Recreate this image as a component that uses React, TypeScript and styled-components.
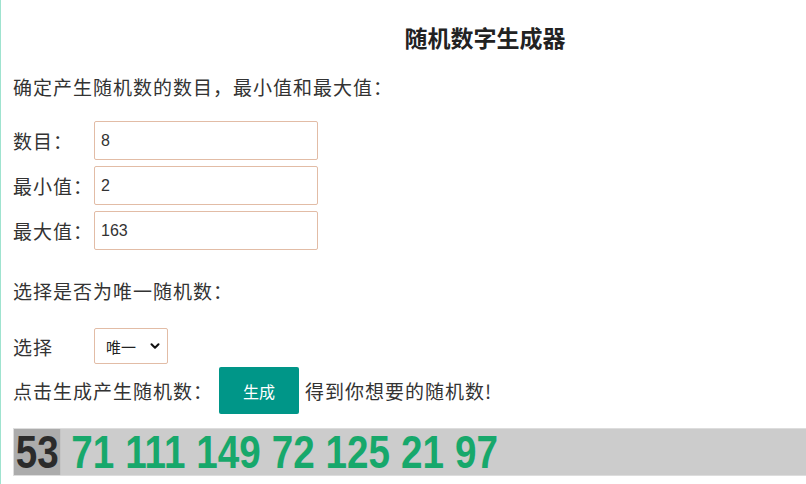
import React, { useState } from "react";
import styled, { createGlobalStyle } from "styled-components";
import { ChevronDown } from "lucide-react";

const GlobalStyle = createGlobalStyle`
  html, body {
    margin: 0;
    padding: 0;
    background: #ffffff;
    overflow: hidden;
  }
  body {
    font-family: "Noto Sans CJK SC", "Noto Sans", sans-serif;
    color: #333333;
  }
`;

const Page = styled.div`
  min-height: 484px;
  padding: 0 12px;
  border-left: 1px solid #9fe3cf;
`;

const Title = styled.h2`
  margin: 0;
  padding: 23px 0 0 163px;
  font-size: 23px;
  line-height: 28px;
  font-weight: 700;
  text-align: center;
  color: #222222;
`;

const Prompt = styled.p<{ $top: number }>`
  margin: ${(p) => p.$top}px 0 0;
  font-size: 19px;
  line-height: 28px;
  letter-spacing: 1px;
`;

const Fields = styled.div`
  margin-top: 20px;
  display: flex;
  flex-direction: column;
  gap: 6px;
`;

const Row = styled.div`
  display: flex;
  align-items: center;
  font-size: 19px;
  letter-spacing: 1px;
`;

const Label = styled.label`
  width: 81px;
  flex: none;
`;

const NumberInput = styled.input`
  width: 224px;
  height: 39px;
  box-sizing: border-box;
  padding: 0 6px;
  border: 1px solid #e2bca6;
  border-radius: 2px;
  font-family: "Liberation Sans", Arial, sans-serif;
  font-size: 16px;
  color: #333333;
  outline: none;
`;

const SelectRow = styled(Row)`
  margin-top: 23px;
`;

const SelectWrap = styled.div`
  position: relative;
  width: 74px;
  height: 36px;

  svg {
    position: absolute;
    right: 6px;
    top: 11px;
    pointer-events: none;
    color: #111111;
  }
`;

const Select = styled.select`
  appearance: none;
  width: 100%;
  height: 100%;
  box-sizing: border-box;
  padding: 0 22px 0 11px;
  border: 1px solid #e2bca6;
  border-radius: 2px;
  background: #ffffff;
  font-family: "Noto Sans CJK SC", sans-serif;
  font-size: 15px;
  color: #222222;
`;

const ActionRow = styled(Row)`
  margin-top: 3px;
  gap: 6px;
`;

const ActionText = styled.span`
  width: 200px;
  flex: none;
`;

const GenerateButton = styled.button`
  width: 80px;
  height: 47px;
  border: none;
  border-radius: 2px;
  background: #009688;
  color: #ffffff;
  font-family: "Noto Sans CJK SC", sans-serif;
  font-size: 16px;
  cursor: pointer;
`;

const Result = styled.div`
  margin: 14px -12px 0 0;
  height: 48px;
  box-sizing: border-box;
  border: 1px solid #dddddd;
  border-right: none;
  background: #cccccc;
`;

const NumberLine = styled.div`
  display: flex;
  align-items: center;
  gap: 13px;
  height: 100%;
  transform: scaleX(0.84);
  transform-origin: left center;
  font-family: "Liberation Sans", Arial, sans-serif;
  font-weight: 700;
  font-size: 46px;
`;

const Num = styled.span<{ $current?: boolean }>`
  display: flex;
  align-items: center;
  height: 100%;
  line-height: 1;
  padding: 0 ${(p) => (p.$current ? "2px" : "0")};
  background: ${(p) => (p.$current ? "#acacac" : "transparent")};
  color: ${(p) => (p.$current ? "#2b2b2b" : "#17a86b")};
`;

export default function App() {
  const [count, setCount] = useState("8");
  const [min, setMin] = useState("2");
  const [max, setMax] = useState("163");
  const numbers = [53, 71, 111, 149, 72, 125, 21, 97];

  return (
    <>
      <GlobalStyle />
      <Page>
        <Title>随机数字生成器</Title>
        <Prompt $top={22}>确定产生随机数的数目，最小值和最大值：</Prompt>
        <Fields>
          <Row>
            <Label>数目：</Label>
            <NumberInput value={count} onChange={(e) => setCount(e.target.value)} />
          </Row>
          <Row>
            <Label>最小值：</Label>
            <NumberInput value={min} onChange={(e) => setMin(e.target.value)} />
          </Row>
          <Row>
            <Label>最大值：</Label>
            <NumberInput value={max} onChange={(e) => setMax(e.target.value)} />
          </Row>
        </Fields>
        <Prompt $top={27}>选择是否为唯一随机数：</Prompt>
        <SelectRow>
          <Label>选择</Label>
          <SelectWrap>
            <Select defaultValue="unique">
              <option value="unique">唯一</option>
              <option value="repeat">可重复</option>
            </Select>
            <ChevronDown size={14} strokeWidth={3.5} />
          </SelectWrap>
        </SelectRow>
        <ActionRow>
          <ActionText>点击生成产生随机数：</ActionText>
          <GenerateButton type="button">生成</GenerateButton>
          <span>得到你想要的随机数!</span>
        </ActionRow>
        <Result>
          <NumberLine>
            {numbers.map((n, i) => (
              <Num key={i} $current={i === 0}>
                {n}
              </Num>
            ))}
          </NumberLine>
        </Result>
      </Page>
    </>
  );
}
